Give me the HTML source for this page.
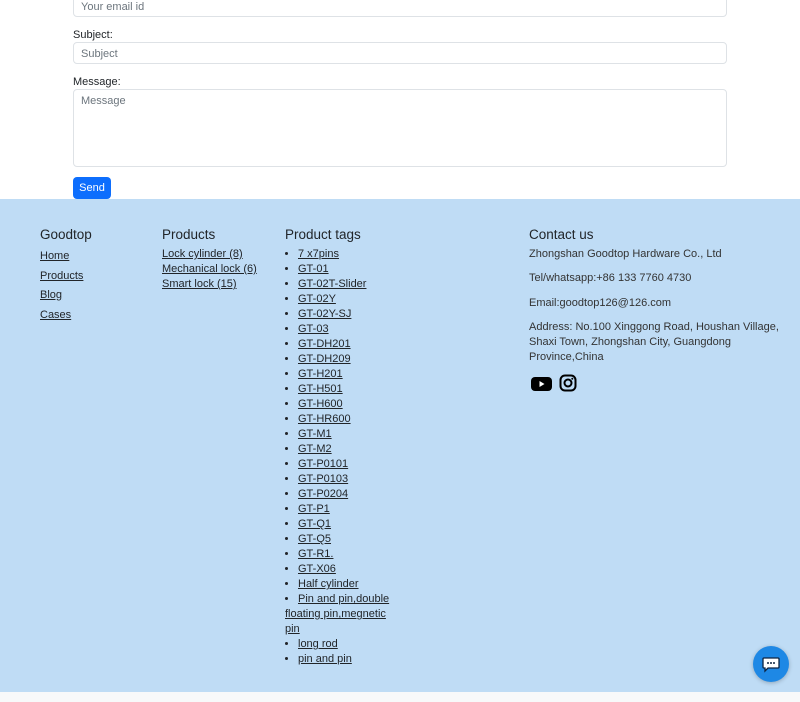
<!DOCTYPE html>
<html><head><style>
*{box-sizing:border-box;margin:0;padding:0}
body{width:800px;height:702px;overflow:hidden;background:#f8f9fa;font-family:"Liberation Sans",sans-serif;color:#212529;font-size:11px;position:relative}
.top{background:#fff;height:199px;position:relative}
.inp{position:absolute;left:73px;width:654px;border:1px solid #dee2e6;border-radius:4px;background:#fff;color:#6c757d;padding:0 7px;font-size:11px}
.lbl{position:absolute;left:73px;font-size:11px;color:#212529}
.btn{position:absolute;left:73px;top:177px;width:38px;height:22px;background:#0d6efd;color:#fff;border-radius:4px;font-size:11px;text-align:center;line-height:22px}
footer{position:absolute;top:199px;left:0;width:800px;height:493px;background:#bfdcf5}
.col{position:absolute;top:28px}
h5{font-size:13.5px;font-weight:normal;line-height:16px;margin-bottom:4px}
a{color:#212529;text-decoration:underline}
.col div{line-height:15px}
ul{list-style:disc outside;padding-left:13px;line-height:15px;white-space:nowrap}
.w{display:block;margin-left:-13px}
.c p{line-height:15px;margin-bottom:9.3px;color:#333}
.chat{position:absolute;left:753px;top:646px;width:36px;height:36px;border-radius:50%;background:#1e88e5;box-shadow:0 1px 4px rgba(0,0,0,.25)}
</style></head><body>
<div class="top">
<div class="inp" style="top:-6px;height:23px;line-height:24px">Your email id</div>
<div class="lbl" style="top:29px">Subject:</div>
<div class="inp" style="top:42px;height:22px;line-height:22px">Subject</div>
<div class="lbl" style="top:76px">Message:</div>
<div class="inp" style="top:89px;height:78px;padding-top:5px">Message</div>
<div class="btn">Send</div>
</div>
<footer>
<div class="col" style="left:40px"><h5>Goodtop</h5>
<div style="line-height:19.5px"><a>Home</a><br><a>Products</a><br><a>Blog</a><br><a>Cases</a></div></div>
<div class="col" style="left:162px"><h5>Products</h5>
<div><a>Lock cylinder (8)</a><br><a>Mechanical lock (6)</a><br><a>Smart lock (15)</a></div></div>
<div class="col" style="left:285px;width:120px"><h5>Product tags</h5>
<ul><li><a>7 x7pins</a></li><li><a>GT-01</a></li><li><a>GT-02T-Slider</a></li><li><a>GT-02Y</a></li><li><a>GT-02Y-SJ</a></li><li><a>GT-03</a></li><li><a>GT-DH201</a></li><li><a>GT-DH209</a></li><li><a>GT-H201</a></li><li><a>GT-H501</a></li><li><a>GT-H600</a></li><li><a>GT-HR600</a></li><li><a>GT-M1</a></li><li><a>GT-M2</a></li><li><a>GT-P0101</a></li><li><a>GT-P0103</a></li><li><a>GT-P0204</a></li><li><a>GT-P1</a></li><li><a>GT-Q1</a></li><li><a>GT-Q5</a></li><li><a>GT-R1.</a></li><li><a>GT-X06</a></li><li><a>Half cylinder</a></li><li><a>Pin and pin,double</a><span class="w"><a>floating pin,megnetic</a></span><span class="w"><a>pin</a></span></li><li><a>long rod</a></li><li><a>pin and pin</a></li></ul></div>
<div class="col c" style="left:529px;width:262px"><h5>Contact us</h5>
<p>Zhongshan Goodtop Hardware Co., Ltd</p>
<p>Tel/whatsapp:+86 133 7760 4730</p>
<p>Email:goodtop126@126.com</p>
<p>Address: No.100 Xinggong Road, Houshan Village,<br>Shaxi Town, Zhongshan City, Guangdong<br>Province,China</p>
<div style="margin-top:6px">
<svg width="22" height="16" viewBox="0 0 22 16" style="margin-left:2px"><rect x="0" y="1" width="21" height="14" rx="4" fill="#000"/><path d="M8.5 5v6l5-3z" fill="#fff"/></svg>
<svg width="18" height="18" viewBox="0 0 18 18" style="margin-left:3px"><rect x="1.5" y="1.5" width="15" height="15" rx="4.5" fill="none" stroke="#000" stroke-width="2"/><circle cx="9" cy="9" r="3.5" fill="none" stroke="#000" stroke-width="2"/><circle cx="13.3" cy="4.7" r="1" fill="#000"/></svg>
</div></div>
</footer>
<div class="chat"><svg width="36" height="36" viewBox="0 0 36 36"><path d="M11 12h14a1 1 0 0 1 1 1v8a1 1 0 0 1-1 1h-10l-3 3v-3h-1a1 1 0 0 1-1-1v-8a1 1 0 0 1 1-1z" fill="#fff" stroke="#0d2340" stroke-width="1.3"/><circle cx="15" cy="17" r="1" fill="#0d2340"/><circle cx="18" cy="17" r="1" fill="#0d2340"/><circle cx="21" cy="17" r="1" fill="#0d2340"/></svg></div>
</body></html>
